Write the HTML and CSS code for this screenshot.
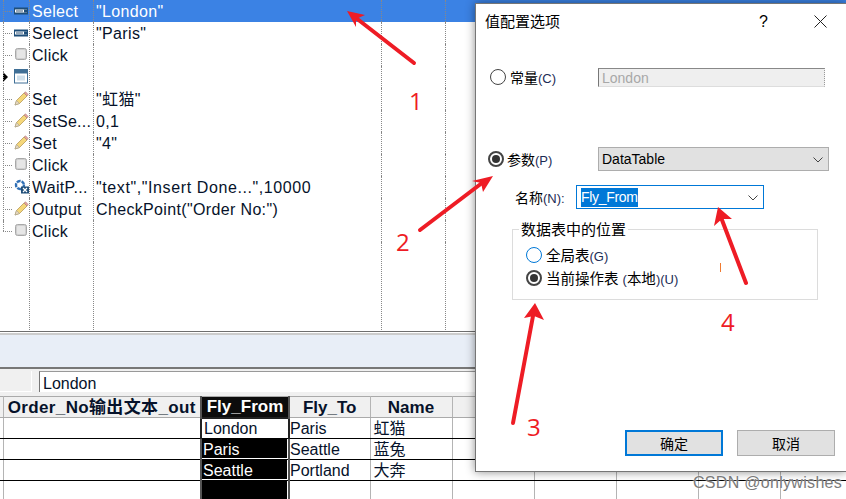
FILE: index.html
```html
<!DOCTYPE html>
<html lang="en">
<head>
  <meta charset="UTF-8" />
  <title>值配置选项</title>
  <link rel="stylesheet" href="styles.css">
</head>
<body>
  <svg class="icon-defs" width="0" height="0">
    <defs>
      <symbol id="i-select" viewBox="0 0 15 15">
        <rect x="0.5" y="5" width="13" height="6" fill="#fff" stroke="#1f4e79" />
        <rect x="0" y="5" width="14" height="1.5" fill="#1f4e79" />
        <rect x="0" y="9.5" width="14" height="1.5" fill="#1f4e79" />
        <rect x="2" y="7" width="7" height="2" fill="#9ab" />
        <rect x="10" y="6.5" width="3" height="3" fill="#1f4e79" />
      </symbol>
      <symbol id="i-click" viewBox="0 0 15 15">
        <rect x="1.5" y="1.5" width="11" height="11" rx="2" fill="#cfcfcf" stroke="#a8a8a8" />
        <rect x="3" y="3" width="8" height="8" rx="1" fill="#e6e6e6" />
      </symbol>
      <symbol id="i-window" viewBox="0 0 15 15">
        <rect x="0.5" y="0.5" width="13" height="13.5" fill="#fff" stroke="#3f6f96" />
        <rect x="1" y="1" width="12" height="3.5" fill="#3f6f96" />
        <rect x="3" y="6.5" width="8" height="5" fill="#cfe0ec" />
      </symbol>
      <symbol id="i-pencil" viewBox="0 0 15 15">
        <path d="M1 14 L2.5 9.5 L10 2 L13 5 L5.5 12.5 Z" fill="#f5d77a" stroke="#b79a5a" stroke-width="0.8" />
        <path d="M10 2 L11.5 0.8 L14.2 3.5 L13 5 Z" fill="#e8a0a0" stroke="#a87" stroke-width="0.6" />
        <path d="M1 14 L2.5 9.5 L5.5 12.5 Z" fill="#e8d9c0" stroke="#998" stroke-width="0.5" />
      </symbol>
      <symbol id="i-wait" viewBox="0 0 15 15">
        <circle cx="6" cy="6" r="4" fill="none" stroke="#2f6fb5" stroke-width="2.4" stroke-dasharray="4 1" />
        <rect x="7" y="7.5" width="8" height="7" fill="#1f4e79" />
        <path d="M9 9 L13 13 M13 9 L9 13" stroke="#fff" stroke-width="1.2" />
      </symbol>
      <symbol id="i-chevron" viewBox="0 0 12 8">
        <path d="M1.5 1.5 L6 6 L10.5 1.5" fill="none" stroke="#444" stroke-width="1" />
      </symbol>
    </defs>
  </svg>

  <div class="app">
    <div class="keyword-view">
      <div class="kw-row selected">
        <div class="tree"><svg class="icon"><use href="#i-select" /></svg></div>
        <div class="kw-op">Select</div><div class="kw-val">"London"</div><div class="kw-blank"></div><div></div>
      </div>
      <div class="kw-row">
        <div class="tree"><svg class="icon"><use href="#i-select" /></svg></div>
        <div class="kw-op">Select</div><div class="kw-val">"Paris"</div><div class="kw-blank"></div><div></div>
      </div>
      <div class="kw-row">
        <div class="tree"><svg class="icon"><use href="#i-click" /></svg></div>
        <div class="kw-op">Click</div><div class="kw-val"></div><div class="kw-blank"></div><div></div>
      </div>
      <div class="kw-row">
        <div class="tree current"><svg class="icon"><use href="#i-window" /></svg></div>
        <div class="kw-op"></div><div class="kw-val"></div><div class="kw-blank"></div><div></div>
      </div>
      <div class="kw-row">
        <div class="tree"><svg class="icon"><use href="#i-pencil" /></svg></div>
        <div class="kw-op">Set</div><div class="kw-val">"虹猫"</div><div class="kw-blank"></div><div></div>
      </div>
      <div class="kw-row">
        <div class="tree"><svg class="icon"><use href="#i-pencil" /></svg></div>
        <div class="kw-op">SetSe...</div><div class="kw-val">0,1</div><div class="kw-blank"></div><div></div>
      </div>
      <div class="kw-row">
        <div class="tree"><svg class="icon"><use href="#i-pencil" /></svg></div>
        <div class="kw-op">Set</div><div class="kw-val">"4"</div><div class="kw-blank"></div><div></div>
      </div>
      <div class="kw-row">
        <div class="tree"><svg class="icon"><use href="#i-click" /></svg></div>
        <div class="kw-op">Click</div><div class="kw-val"></div><div class="kw-blank"></div><div></div>
      </div>
      <div class="kw-row">
        <div class="tree"><svg class="icon"><use href="#i-wait" /></svg></div>
        <div class="kw-op">WaitP...</div><div class="kw-val wait-args">"text","Insert Done...",10000</div><div class="kw-blank"></div><div></div>
      </div>
      <div class="kw-row">
        <div class="tree"><svg class="icon"><use href="#i-pencil" /></svg></div>
        <div class="kw-op">Output</div><div class="kw-val">CheckPoint("Order No:")</div><div class="kw-blank"></div><div></div>
      </div>
      <div class="kw-row">
        <div class="tree last"><svg class="icon"><use href="#i-click" /></svg></div>
        <div class="kw-op">Click</div><div class="kw-val"></div><div class="kw-blank"></div><div></div>
      </div>
      <div class="kw-row filler">
        <div class="tree-empty"></div>
        <div class="kw-op"></div><div class="kw-val"></div><div class="kw-blank"></div><div></div>
      </div>
    </div>

    <div class="tab-band"></div>

    <div class="formula-bar">
      <div class="cell-ref"></div>
      <div class="formula-input">London</div>
    </div>

    <table class="data-grid">
      <colgroup>
        <col class="c-gutter"><col class="c-order"><col class="c-from"><col class="c-to"><col class="c-name">
        <col class="c-rest"><col class="c-rest"><col class="c-rest"><col class="c-rest"><col class="c-last">
      </colgroup>
      <tr>
        <th></th><th class="wide-head">Order_No输出文本_out</th><th class="col-sel">Fly_From</th><th>Fly_To</th><th>Name</th>
        <th></th><th></th><th></th><th></th><th></th>
      </tr>
      <tr>
        <td></td><td></td><td class="col-active">London</td><td>Paris</td><td>虹猫</td>
        <td></td><td></td><td></td><td></td><td></td>
      </tr>
      <tr>
        <td></td><td></td><td class="col-sel">Paris</td><td>Seattle</td><td>蓝兔</td>
        <td></td><td></td><td></td><td></td><td></td>
      </tr>
      <tr>
        <td></td><td></td><td class="col-sel">Seattle</td><td>Portland</td><td>大奔</td>
        <td></td><td></td><td></td><td></td><td></td>
      </tr>
      <tr>
        <td></td><td></td><td class="col-sel"></td><td></td><td></td>
        <td></td><td></td><td></td><td></td><td></td>
      </tr>
    </table>
  </div>

  <div class="dialog">
    <div class="dialog-title">
      <span class="title-text">值配置选项</span>
      <span class="title-help">?</span>
      <svg class="title-close" viewBox="0 0 13 13"><path d="M0.5 0.5 L12.5 12.5 M12.5 0.5 L0.5 12.5" stroke="#222" stroke-width="1" fill="none" /></svg>
    </div>

    <div class="opt-row opt-const">
      <label class="radio-label"><span class="radio"></span><span>常量<span class="key">(C)</span></span></label>
      <div class="readonly-field">London</div>
    </div>

    <div class="opt-row opt-param">
      <label class="radio-label"><span class="radio checked"></span><span>参数<span class="key">(P)</span></span></label>
      <div class="select-box">DataTable<svg class="chevron"><use href="#i-chevron" /></svg></div>
    </div>

    <div class="name-row">
      <span class="name-label">名称<span class="key">(N):</span></span>
      <div class="combo"><span class="combo-sel">Fly_From</span><svg class="chevron"><use href="#i-chevron" /></svg></div>
    </div>

    <fieldset class="location-group">
      <legend>数据表中的位置</legend>
      <label class="radio-label"><span class="radio focus"></span><span>全局表<span class="key">(G)</span></span></label>
      <label class="radio-label"><span class="radio checked"></span><span>当前操作表 <span class="key">(</span>本地<span class="key">)(U)</span></span></label>
      <span class="stray-tick"></span>
    </fieldset>

    <div class="dialog-buttons">
      <button class="btn btn-default">确定</button>
      <button class="btn">取消</button>
    </div>
  </div>

  <!-- red annotations drawn over the screenshot -->
  <svg class="notes" viewBox="0 0 846 499">
    <g stroke="#ee1c25" stroke-width="4" stroke-linecap="round" fill="none">
      <path d="M414 63 L356 18" />
      <path d="M420 230 L482 183" />
      <path d="M513 423 L533 316" />
      <path d="M746 283 L722 220" />
    </g>
    <g fill="#ee1c25">
      <polygon points="347,11 365,15 356,19 356,27" />
      <polygon points="493,176 483,192 481,183 472,181" />
      <polygon points="535,303 544,320 534,316 524,318" />
      <polygon points="718,207 732,219 722,219 714,226" />
    </g>
    <g class="note-num">
      <text x="409" y="110">1</text>
      <text x="396" y="251">2</text>
      <text x="527" y="436">3</text>
      <text x="721" y="331">4</text>
    </g>
  </svg>

  <div class="watermark">CSDN @onlywishes</div>
</body>
</html>
```

FILE: styles.css
```css
* {
  box-sizing: border-box;
}

body {
  margin: 0;
  width: 846px;
  height: 499px;
  overflow: hidden;
  position: relative;
  background: #fff;
  color: #000;
  font-family: "Liberation Sans", "Noto Sans CJK SC", sans-serif;
  font-size: 16px;
}

.icon-defs {
  position: absolute;
}

/* keyword view */
.keyword-view {
  height: 331px;
  overflow: hidden;
}

.kw-row {
  display: grid;
  grid-template-columns: 29px 64px 288px 64px 1fr;
  height: 22px;
  line-height: 24px;
  color: #06122a;
}

.kw-row.filler {
  height: 100px;
}

.kw-row.selected {
  background: #3b82e4;
  color: #fff;
}

.kw-op {
  padding-left: 2px;
  border-left: 1px dotted #888;
  white-space: nowrap;
  letter-spacing: 0.3px;
}

.kw-val {
  padding-left: 2px;
  border-left: 1px dotted #888;
  white-space: nowrap;
  letter-spacing: 0.35px;
}

.kw-val.wait-args {
  letter-spacing: 0.6px;
}

.kw-blank {
  border-left: 1px dotted #888;
}

.kw-blank + div {
  border-left: 1px dotted #888;
}

.tree {
  position: relative;
  padding: 3px 0 0 14px;
}

.tree::before {
  content: "";
  position: absolute;
  left: 3px;
  top: 11px;
  width: 9px;
  border-top: 1px dotted #888;
}

.tree::after {
  content: "";
  position: absolute;
  left: 3px;
  top: 0;
  height: 100%;
  border-left: 1px dotted #888;
}

.tree.last::after {
  height: 11px;
}

.tree.current::before {
  left: 3px;
  top: 6px;
  width: 0;
  border-top: 5px solid transparent;
  border-bottom: 5px solid transparent;
  border-left: 5px solid #000;
}

.icon {
  display: block;
  width: 15px;
  height: 15px;
}

/* band + formula bar */
.tab-band {
  height: 38px;
  background: #e8eef7;
  border-top: 1px solid #6e6e6e;
  border-bottom: 2px solid #777;
  box-shadow: inset 0 1px 0 #fff, inset 0 3px 0 #ccc;
  padding-top: 6px;
}

.formula-bar {
  display: flex;
  height: 27px;
  background: #f0f0f0;
  padding: 2px 0 4px;
}

.cell-ref {
  width: 32px;
  background: #f0f0f0;
  border-right: 1px solid #fff;
  border-bottom: 1px solid #fff;
}

.formula-input {
  margin-left: 7px;
  flex: 1;
  background: #fff;
  border-left: 1px solid #777;
  border-top: 1px solid #999;
  padding-left: 3px;
  line-height: 23px;
  font-size: 16px;
  color: #06122a;
}

/* data table */
.data-grid {
  table-layout: fixed;
  border-collapse: collapse;
  width: 846px;
}

.c-gutter { width: 3px; }
.c-order { width: 198px; }
.c-from { width: 88px; }
.c-to { width: 81px; }
.c-name { width: 82px; }
.c-rest { width: 82px; }
.c-last { width: 66px; }

.data-grid th,
.data-grid td {
  height: 21px;
  padding: 0 1px;
  border-left: 1px solid #b4b4b4;
  border-right: 1px solid #b4b4b4;
  border-bottom: 1px solid #000;
  font-size: 16px;
  font-weight: normal;
  line-height: 19px;
  white-space: nowrap;
  overflow: hidden;
  color: #06122a;
}

.data-grid th:first-child,
.data-grid td:first-child {
  border-left: 0;
}

.data-grid td:nth-child(4) {
  padding-left: 0;
}

.data-grid td:nth-child(5) {
  padding-left: 3px;
}

.data-grid th {
  background: #f0f0f0;
  border-top: 1px solid #aaa;
  border-bottom: 1px solid #aaa;
  font-size: 17px;
  font-weight: bold;
  text-align: center;
}

.data-grid th.wide-head {
  letter-spacing: 0.35px;
}

.data-grid tr:last-child td {
  border-bottom: 0;
}

.data-grid th.col-sel {
  background: #0c0c0c;
  color: #fff;
  border-left: 2px solid #555;
  border-right: 2px solid #555;
}

.data-grid td.col-sel {
  background: #000;
  color: #fff;
  border-left: 2px solid #555;
  border-right: 2px solid #555;
  box-shadow: inset -1px -1px 0 #fff;
}

.data-grid td.col-active {
  background: #fff;
  padding-left: 2px;
  border: 2px solid #222;
  border-bottom: 1px solid #000;
}

/* dialog */
.dialog {
  position: absolute;
  left: 475px;
  top: 3px;
  width: 371px;
  height: 469px;
  background: #fff;
  border: 1px solid #767676;
  border-right: 0;
  box-shadow: 0 0 9px rgba(0, 0, 0, 0.45);
  font-size: 14px;
  color: #000;
}

.dialog-title {
  position: relative;
  height: 38px;
  line-height: 36px;
  padding-left: 9px;
  font-size: 15px;
}

.title-help {
  position: absolute;
  left: 283px;
  top: 0;
  font-size: 16px;
}

.title-close {
  position: absolute;
  left: 338px;
  top: 11px;
  width: 13px;
  height: 13px;
}

.key {
  font-family: "Liberation Sans", sans-serif;
  font-size: 13px;
  color: #1c2c55;
}

.radio-label {
  display: flex;
  align-items: center;
  gap: 4px;
  white-space: pre;
}

.radio {
  position: relative;
  width: 16px;
  height: 16px;
  flex: none;
  border: 1px solid #444;
  border-radius: 50%;
  background: #fff;
}

.radio.focus {
  border-color: #0078d7;
}

.radio.checked {
  border: 2px solid #444;
}

.radio.checked::after {
  content: "";
  position: absolute;
  inset: 2px;
  border-radius: 50%;
  background: #333;
}

.opt-row {
  display: flex;
  align-items: center;
}

.opt-const {
  margin-top: 25px;
  padding-left: 14px;
  height: 20px;
}

.opt-const .radio-label {
  width: 108px;
}

.readonly-field {
  width: 227px;
  height: 19px;
  line-height: 18px;
  padding-left: 3px;
  background: #efefef;
  border-left: 1px solid #777;
  border-top: 1px solid #888;
  border-right: 1px dotted #999;
  border-bottom: 1px solid #ddd;
  color: #a8a8a8;
}

.opt-param {
  margin-top: 60px;
  padding-left: 12px;
}

.opt-param .radio-label {
  width: 110px;
  gap: 3px;
}

.select-box,
.combo {
  position: relative;
  display: flex;
  align-items: center;
}

.select-box {
  width: 231px;
  height: 24px;
  padding-left: 3px;
  background: #e1e1e1;
  border: 1px solid #adadad;
}

.chevron {
  position: absolute;
  right: 4px;
  top: 8px;
  width: 12px;
  height: 8px;
}

.name-row {
  display: flex;
  align-items: center;
  margin-top: 14px;
  padding-left: 39px;
}

.name-label {
  width: 61px;
}

.combo {
  width: 188px;
  height: 24px;
  padding-left: 4px;
  border: 1px solid #0078d7;
}

.combo-sel {
  background: #0078d7;
  color: #fff;
  line-height: 19px;
  letter-spacing: -0.3px;
}

.location-group {
  position: relative;
  display: flex;
  flex-direction: column;
  gap: 2px;
  width: 306px;
  height: 79px;
  margin: 12px 0 0 36px;
  padding: 6px 0 0 13px;
  border: 1px solid #dcdcdc;
}

.location-group legend {
  margin-left: -7px;
  padding: 0 2px;
  font-size: 15px;
  line-height: 17px;
}

.stray-tick {
  position: absolute;
  left: 207px;
  top: 25px;
  width: 1px;
  height: 9px;
  background: #f07a30;
}

.location-group .radio-label {
  font-size: 14.5px;
}

.dialog-buttons {
  display: flex;
  gap: 14px;
  margin: 130px 0 0 149px;
}

.btn {
  width: 98px;
  height: 26px;
  padding: 0;
  background: #e1e1e1;
  border: 1px solid #adadad;
  font: inherit;
  color: #000;
}

.btn-default {
  border: 2px solid #0078d7;
}

/* overlays */
.notes {
  position: absolute;
  left: 0;
  top: 0;
  width: 846px;
  height: 499px;
  pointer-events: none;
}

.note-num {
  font-family: "Open Sans", sans-serif;
  font-size: 24px;
  fill: #ee1c25;
}

.watermark {
  position: absolute;
  left: 693px;
  top: 474px;
  font-size: 16px;
  letter-spacing: 0.3px;
  color: #7a7a7a;
  text-shadow: 0 0 2px #fff;
  white-space: nowrap;
}
```
